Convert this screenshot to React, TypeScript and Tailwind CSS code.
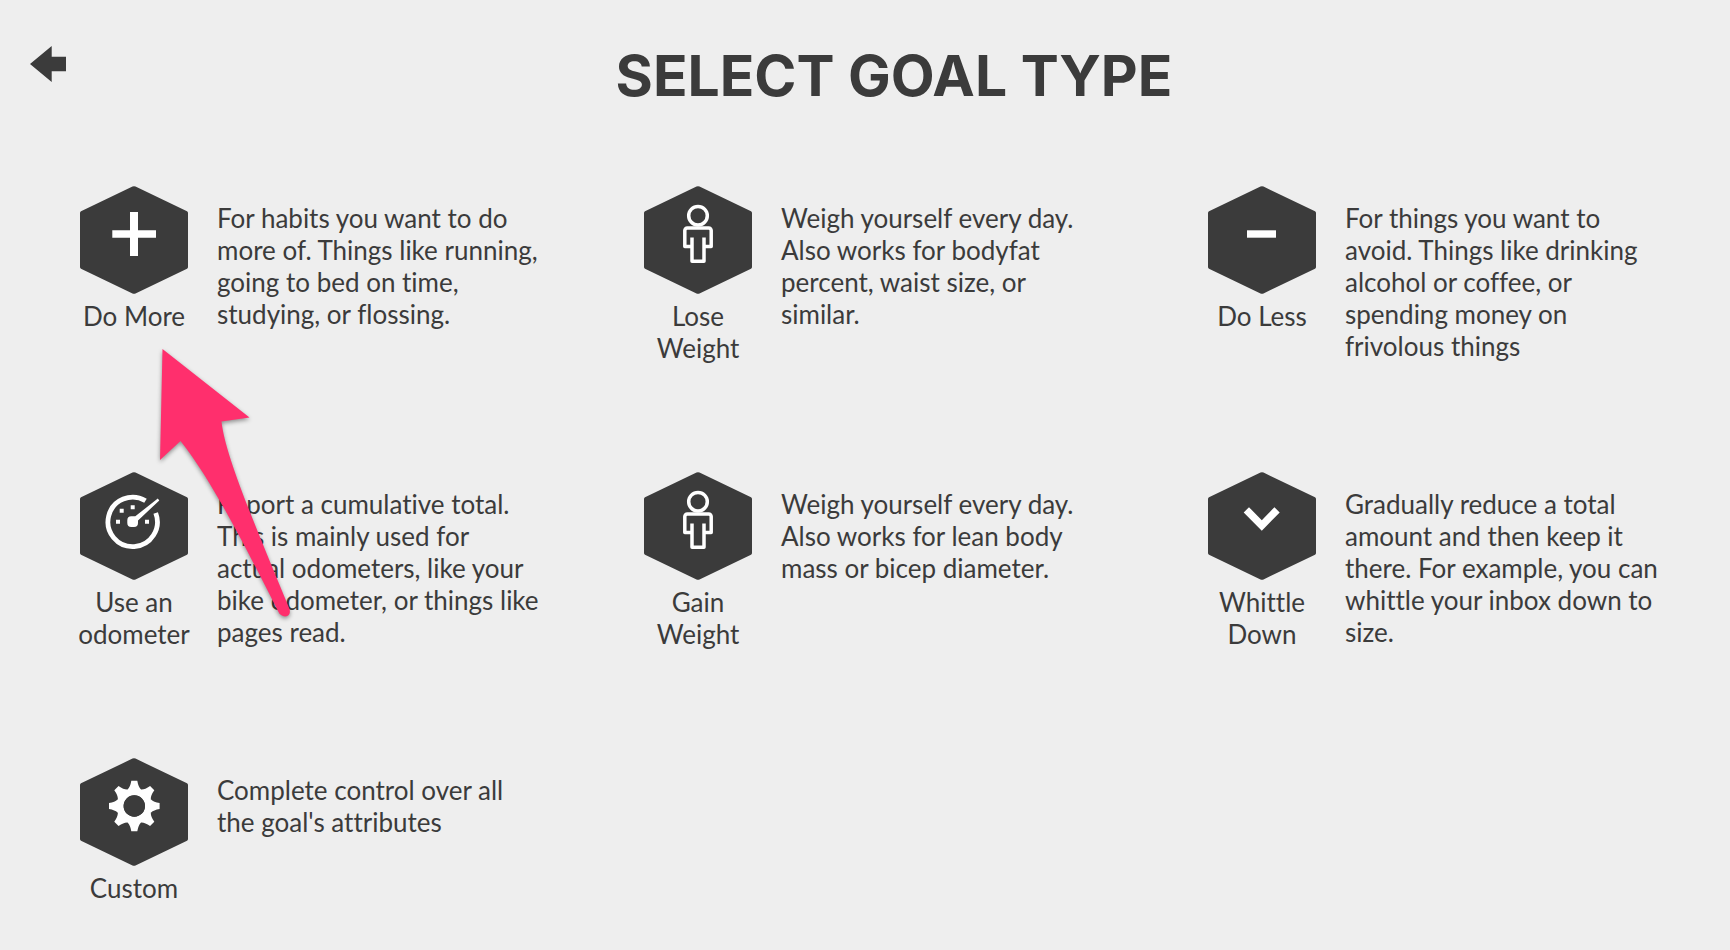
import React from 'react';

const ink = '#3b3b3b';

const PlusIcon = () => (
  <path fill="#fff" d="M50 26h8v18.300h18v7.400H58V70h-8V51.700H32.300v-7.400H50z" />
);

const MinusIcon = () => <path fill="#fff" d="M39 44.300h29v7.400H39z" />;

const ChevronIcon = () => (
  <path fill="#fff" d="M35.700 40.400 41 35.200l12.800 13 12.600-13 5.300 5.200L53.800 58.700z" />
);

const PersonIcon = () => (
  <g fill="none" stroke="#fff" strokeWidth="3.5" strokeLinejoin="round">
    <circle cx="54" cy="29.7" r="9.3" />
    <path d="M48 51.500V75.300h12V51.500M48 60.600H40.800V44.500a2.500 2.500 0 0 1 2.500-2.500h21.400a2.500 2.500 0 0 1 2.500 2.500v16.100H60" />
  </g>
);

const GaugeIcon = () => (
  <g fill="#fff">
    <path
      d="M65.500 28.800A24.700 24.700 0 1 0 75.700 41"
      fill="none"
      stroke="#fff"
      strokeWidth="4.8"
    />
    <path d="M77.800 26.500 79.300 28.500 58 48.500v2.500a4 4 0 0 1-4 4h-2.700a4 4 0 0 1-4-4V48.300a4 4 0 0 1 4-4h4z" />
    <path d="M50.700 33.300h4v4h-4zM39.700 36.700h4v4h-4zM36 47.700h4v4h-4zM65 47.700h4v4h-4z" />
  </g>
);

const teeth = [0, 45, 90, 135, 180, 225, 270, 315];

const GearIcon = () => (
  <g fill="#fff">
    {teeth.map((angle) => (
      <path
        key={angle}
        d="M51.300 22.700h6q1 6 3.500 8.500v4h-13v-4q2.500-2.500 3.500-8.500z"
        transform={`rotate(${angle} 54.3 48)`}
      />
    ))}
    <circle cx="54.3" cy="48" r="14.2" fill="none" stroke="#fff" strokeWidth="7" />
    <circle cx="54.3" cy="48" r="10.7" fill={ink} />
  </g>
);

const goals = [
  {
    label: 'Do More',
    icon: PlusIcon,
    text: 'For habits you want to do more of. Things like running, going to bed on time, studying, or flossing.',
  },
  {
    label: 'Lose Weight',
    icon: PersonIcon,
    text: 'Weigh yourself every day. Also works for bodyfat percent, waist size, or similar.',
  },
  {
    label: 'Do Less',
    icon: MinusIcon,
    text: 'For things you want to avoid. Things like drinking alcohol or coffee, or spending money on frivolous things',
  },
  {
    label: 'Use an odometer',
    icon: GaugeIcon,
    text: 'Report a cumulative total. This is mainly used for actual odometers, like your bike odometer, or things like pages read.',
  },
  {
    label: 'Gain Weight',
    icon: PersonIcon,
    text: 'Weigh yourself every day. Also works for lean body mass or bicep diameter.',
  },
  {
    label: 'Whittle Down',
    icon: ChevronIcon,
    text: 'Gradually reduce a total amount and then keep it there. For example, you can whittle your inbox down to size.',
  },
  {
    label: 'Custom',
    icon: GearIcon,
    text: "Complete control over all the goal's attributes",
  },
];

const App: React.FC = () => (
  <div className="relative min-h-screen bg-[#eeeeee] font-['Lato',sans-serif] text-[#3b3b3b] [font-variant-ligatures:none]">
    <header className="flex items-start pt-[46px] pr-2 pl-[30px]">
      <button type="button" aria-label="Back" className="shrink-0 cursor-pointer">
        <svg width="36" height="36" viewBox="0 0 36 36" className="block">
          <path fill={ink} d="M0 18 21.700 0v10.800H36v14.400H21.700V36z" />
        </svg>
      </button>
      <h1 className="flex-1 text-center font-['Inter',sans-serif] text-[57px] leading-[60px] font-bold">
        SELECT GOAL TYPE
      </h1>
    </header>

    <main className="grid grid-cols-3 gap-x-[101px] gap-y-[108px] pt-20 pr-[61px] pl-[78px]">
      {goals.map(({ label, icon: Icon, text }) => (
        <section key={label} className="flex items-start gap-[27px]">
          <button
            type="button"
            className="flex w-28 shrink-0 cursor-pointer flex-col items-center gap-1.5 text-[26px] leading-8"
          >
            <svg width="108" height="108" viewBox="0 0 108 108" className="block">
              <path
                fill={ink}
                d="M52.500 .6Q54 -.2 55.500 .6L107 25.300Q108 26 108 27V81Q108 82 107 82.700L55.500 107.400Q54 108.200 52.500 107.400L1 82.700Q0 82 0 81V27Q0 26 1 25.300z"
              />
              <Icon />
            </svg>
            {label}
          </button>
          <p className="flex-1 pt-4 text-[26px] leading-8">{text}</p>
        </section>
      ))}
    </main>

    {/* pointer to the first goal type */}
    <svg
      width="110"
      height="280"
      viewBox="0 0 110 280"
      className="pointer-events-none absolute top-[345px] left-[150px] drop-shadow-[0_2px_2px_rgba(0,0,0,0.4)]"
      aria-hidden="true"
      overflow="visible"
    >
      <path
        fill="#ff2f6d"
        d="M12.500 4 99.500 72.500 71.500 76.500C75 110 103 175 139.500 264C142 273 131 274 128 266C104 219 63 136 30.500 96L10 115z"
      />
    </svg>
  </div>
);

export default App;
